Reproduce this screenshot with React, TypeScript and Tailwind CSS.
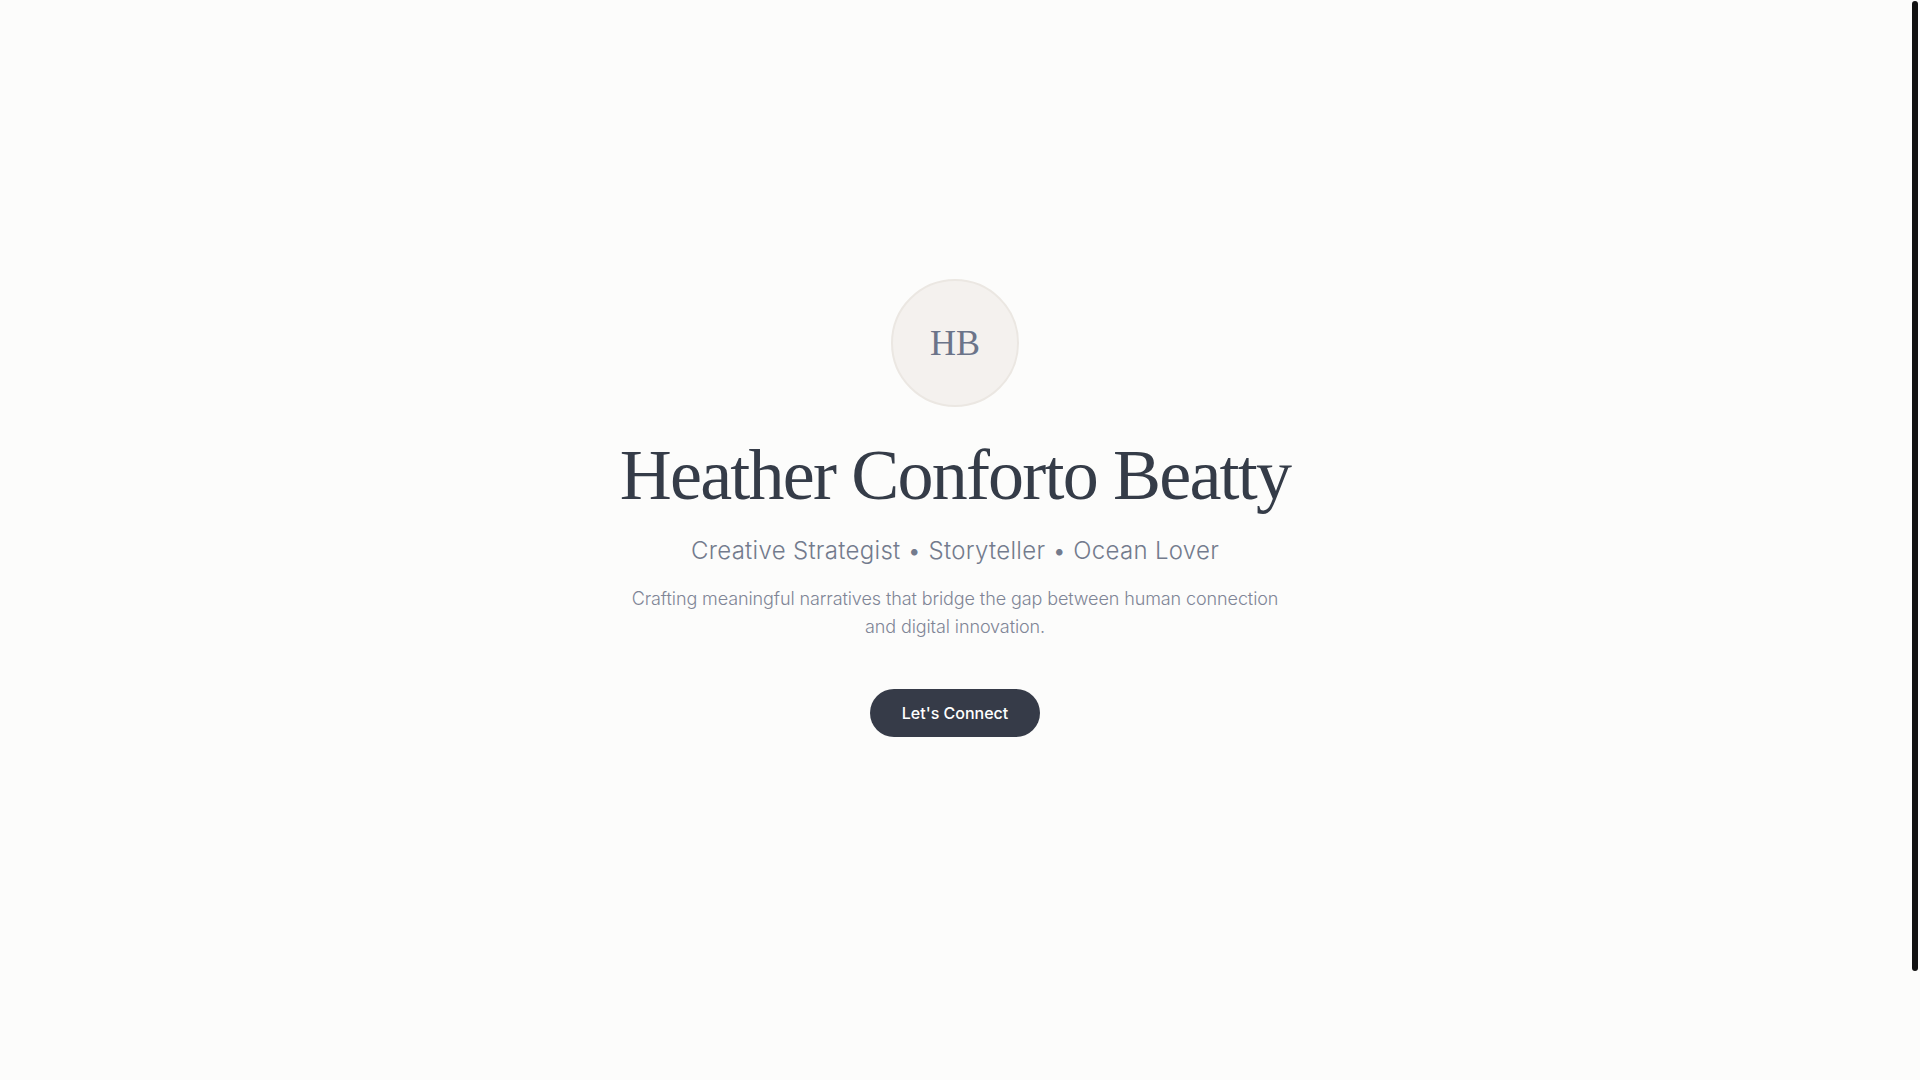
export default function App() {
  return (
    <div
      className="relative h-screen overflow-hidden bg-[#fcfcfb] pr-[10px]"
      style={{ fontFamily: 'Inter, "Noto Sans", sans-serif' }}
    >
      {/* hero */}
      <section className="min-h-screen flex flex-col items-center justify-center pb-16 text-center">
        <div className="w-32 h-32 rounded-full bg-[#f4f1ee] border-2 border-[#ebe7e2] flex items-center justify-center mb-8">
          <span
            className="text-4xl text-[#6b7489]"
            style={{ fontFamily: '"Liberation Serif", "Times New Roman", serif' }}
          >
            HB
          </span>
        </div>

        <h1
          className="text-7xl leading-none tracking-tight text-[#353c48] mb-6"
          style={{ fontFamily: '"Liberation Serif", "Times New Roman", serif' }}
        >
          Heather Conforto Beatty
        </h1>

        <p className="text-2xl font-light tracking-[0.3px] text-[#737b8d] mb-[18px]">
          Creative Strategist • Storyteller • Ocean Lover
        </p>

        <p className="text-lg leading-7 font-light tracking-[-0.1px] text-[#7f8596] max-w-2xl mb-12">
          Crafting meaningful narratives that bridge the gap between human connection and digital innovation.
        </p>

        <button className="bg-[#363b48] text-white text-base font-medium rounded-full px-8 py-3 leading-6">
          Let's Connect
        </button>
      </section>

      {/* page scrollbar thumb */}
      <div className="absolute right-[2px] top-[1px] w-[6px] h-[970px] rounded-full bg-[#111111]" />
    </div>
  );
}
